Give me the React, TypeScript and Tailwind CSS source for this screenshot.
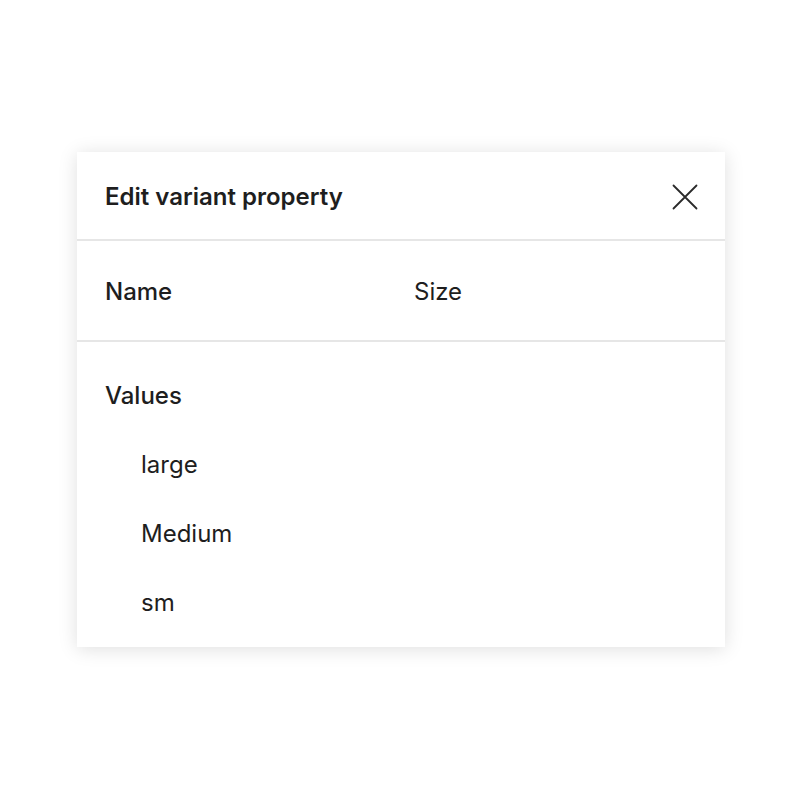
const values = ["large", "Medium", "sm"];

function CloseIcon() {
  return (
    <svg width="26" height="26" viewBox="0 0 26 26" fill="none" stroke="currentColor" strokeWidth="1.8" strokeLinecap="round">
      <path d="M1.5 1.5 L24.5 24.5 M24.5 1.5 L1.5 24.5" />
    </svg>
  );
}

export default function App() {
  return (
    <div
      className="w-[800px] h-[800px] bg-white pl-[77px] pt-[152px] text-[#1e1e1e]"
      style={{ fontFamily: "Inter, 'Noto Sans', sans-serif" }}
    >
      <div className="w-[648px] bg-white shadow-[0_2px_18px_rgba(0,0,0,0.13)]">
        {/* Header */}
        <div className="h-[89px] pl-[28px] pr-[27px] pt-[2px] flex items-center justify-between border-b-2 border-[#e6e6e6]">
          <h2 className="text-[24px] font-semibold">Edit variant property</h2>
          <button type="button" className="text-[#2a2a2a]" aria-label="Close">
            <CloseIcon />
          </button>
        </div>

        {/* Name row */}
        <div className="h-[101px] px-[28px] pt-[2px] flex items-center border-b-2 border-[#e6e6e6] text-[24px]">
          <span className="w-[309px] font-medium">Name</span>
          <span>Size</span>
        </div>

        {/* Values */}
        <div className="pt-[19px] pb-[10px] px-[28px] text-[24px]">
          <div className="h-[69px] flex items-center font-medium">Values</div>
          {values.map((v) => (
            <div key={v} className="h-[69px] flex items-center pl-[36px]">
              {v}
            </div>
          ))}
        </div>
      </div>
    </div>
  );
}
